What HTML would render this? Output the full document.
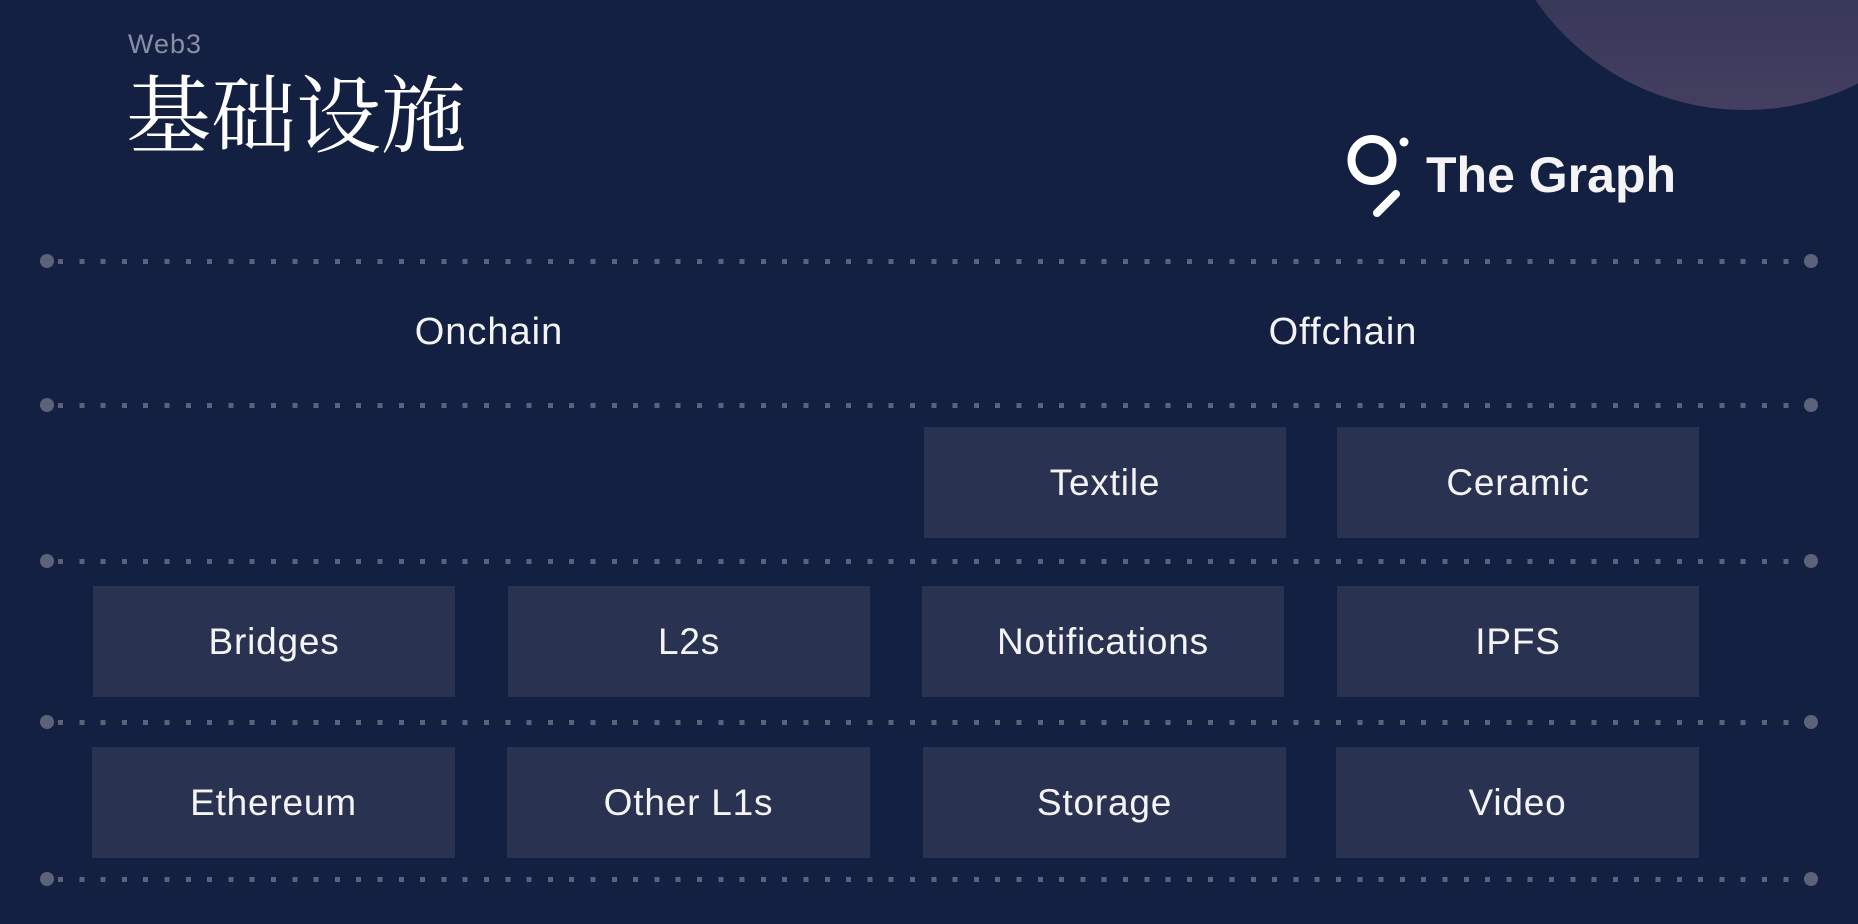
<!DOCTYPE html>
<html><head><meta charset="utf-8"><style>
*{margin:0;padding:0;box-sizing:border-box}
html,body{width:1858px;height:924px;overflow:hidden;background:#142042;font-family:"Liberation Sans","Noto Sans CJK SC",sans-serif;color:#f4f4f6}
.circ{position:absolute;left:1490px;top:-400px;width:510px;height:510px;border-radius:50%;background:linear-gradient(180deg,#2e3253 60%,#443f60 100%)}
.web3{position:absolute;left:128px;top:29px;font-size:27px;color:#8a8fa6;letter-spacing:1px}
.title{position:absolute;left:126px;top:68px;font-size:85px;line-height:100px;font-family:"Liberation Serif","Noto Serif CJK SC",serif;color:#fff}
.line{position:absolute;left:40px;width:1778px;height:14px}
.line::before{content:"";position:absolute;left:0;top:0;width:14px;height:14px;border-radius:50%;background:#5c6278}
.line::after{content:"";position:absolute;right:0;top:0;width:14px;height:14px;border-radius:50%;background:#5c6278}
.line i{position:absolute;left:18px;right:18px;top:5px;height:5px;background:repeating-linear-gradient(90deg,#5c6278 0 5px,transparent 5px 21.3px)}
.box{position:absolute;width:362px;height:111px;background:#293250;display:flex;align-items:center;justify-content:center;font-size:37px;letter-spacing:0.8px}
.hd{position:absolute;font-size:38px;letter-spacing:1px;transform:translateX(-50%);top:311px}
.logo{position:absolute;left:1426px;top:146px;font-size:50px;font-weight:bold;letter-spacing:0px}
</style></head><body>
<div class="circ"></div>
<div class="web3">Web3</div>
<div class="title">基础设施</div>
<svg style="position:absolute;left:1340px;top:130px" width="80" height="90" viewBox="0 0 80 90">
<ellipse cx="32" cy="30" rx="20.5" ry="21" fill="none" stroke="#fff" stroke-width="8"/>
<circle cx="64" cy="12" r="4.5" fill="#fff"/>
<line x1="37" y1="83" x2="56" y2="64" stroke="#fff" stroke-width="8" stroke-linecap="round"/>
</svg>
<div class="logo">The Graph</div>
<div class="line" style="top:254px"><i></i></div>
<div class="line" style="top:398px"><i></i></div>
<div class="line" style="top:554px"><i></i></div>
<div class="line" style="top:715px"><i></i></div>
<div class="line" style="top:872px"><i></i></div>
<div class="hd" style="left:489px">Onchain</div>
<div class="hd" style="left:1343px">Offchain</div>
<div class="box" style="left:924px;top:427px">Textile</div>
<div class="box" style="left:1337px;top:427px">Ceramic</div>
<div class="box" style="left:93px;top:586px">Bridges</div>
<div class="box" style="left:508px;top:586px">L2s</div>
<div class="box" style="left:922px;top:586px">Notifications</div>
<div class="box" style="left:1337px;top:586px">IPFS</div>
<div class="box" style="left:92px;top:747px;width:363px">Ethereum</div>
<div class="box" style="left:507px;top:747px;width:363px">Other L1s</div>
<div class="box" style="left:923px;top:747px;width:363px">Storage</div>
<div class="box" style="left:1336px;top:747px;width:363px">Video</div>
</body></html>
